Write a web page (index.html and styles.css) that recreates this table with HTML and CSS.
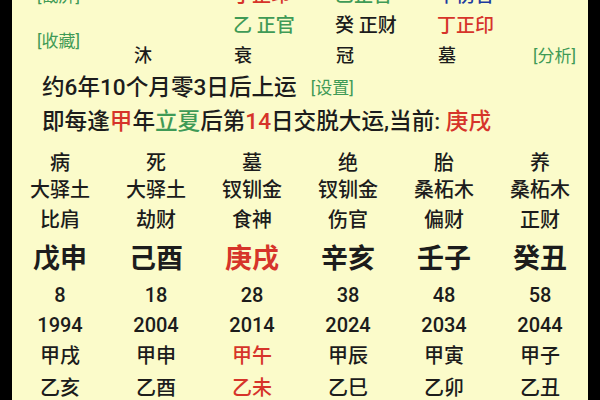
FILE: index.html
```html
<!DOCTYPE html>
<html lang="zh-CN">
<head>
<meta charset="utf-8">
<link rel="stylesheet" href="styles.css">
</head>
<body>
<div class="screen">
  <div class="pillars">
    <div class="label r1">[截屏]</div>
    <div class="label r23">[收藏]</div>
    <div class="c3 r1 red">丁正印</div>
    <div class="c4 r1 green">乙正官</div>
    <div class="c5 r1 blue">辛伤官</div>
    <div class="c3 r2 green">乙 正官</div>
    <div class="c4 r2">癸 正财</div>
    <div class="c5 r2 red">丁正印</div>
    <div class="c2 r3 stage">沐</div>
    <div class="c3 r3 stage">衰</div>
    <div class="c4 r3 stage">冠</div>
    <div class="c5 r3 stage">墓</div>
    <div class="c6 r3 label">[分析]</div>
  </div>
  <div class="info">
    <div class="line1">约6年10个月零3日后上运<span class="link">[设置]</span></div>
    <div class="line2">即每逢<span class="red">甲</span>年<span class="green">立夏</span>后第<span class="red">14</span>日交脱大运,当前: <span class="red">庚戌</span></div>
  </div>
  <div class="luck">
    <div>病</div><div>死</div><div>墓</div><div>绝</div><div>胎</div><div>养</div>
    <div>大驿土</div><div>大驿土</div><div>钗钏金</div><div>钗钏金</div><div>桑柘木</div><div>桑柘木</div>
    <div>比肩</div><div>劫财</div><div>食神</div><div>伤官</div><div>偏财</div><div>正财</div>
    <div class="big">戊申</div><div class="big">己酉</div><div class="big red">庚戌</div><div class="big">辛亥</div><div class="big">壬子</div><div class="big">癸丑</div>
    <div>8</div><div>18</div><div>28</div><div>38</div><div>48</div><div>58</div>
    <div>1994</div><div>2004</div><div>2014</div><div>2024</div><div>2034</div><div>2044</div>
    <div>甲戌</div><div>甲申</div><div class="red">甲午</div><div>甲辰</div><div>甲寅</div><div>甲子</div>
    <div>乙亥</div><div>乙酉</div><div class="red">乙未</div><div>乙巳</div><div>乙卯</div><div>乙丑</div>
  </div>
</div>
</body>
</html>
```

FILE: styles.css
```css
html, body {
  margin: 0;
  padding: 0;
  background: #000;
}
body {
  width: 600px;
  height: 400px;
  overflow: hidden;
}
.screen {
  margin: 0 12px;
  width: 576px;
  height: 400px;
  overflow: hidden;
  background: #fbfbca;
  color: #1c1c1c;
  font-family: Roboto, "Noto Sans CJK SC", sans-serif;
  font-weight: 500;
}
.red { color: #d6342a; }
.green { color: #3f9a56; }
.blue { color: #1c3a9e; }

.pillars {
  margin-top: -19px;
  display: grid;
  grid-template-columns: 121px 100px 102px 102px 96px 1fr;
  grid-template-rows: 30px 30px 30px;
  font-size: 19px;
  line-height: 30px;
}
.pillars .label {
  color: #3f9a56;
  font-size: 17px;
  font-weight: 400;
  padding-left: 25px;
}
.pillars .c6.label { padding-left: 0; }
.c2 { grid-column: 2; }
.c3 { grid-column: 3; }
.c4 { grid-column: 4; }
.c5 { grid-column: 5; }
.c6 { grid-column: 6; }
.r1 { grid-row: 1; }
.r2 { grid-row: 2; }
.r3 { grid-row: 3; }
.r23 { grid-row: 2 / span 2; align-self: center; }
.stage { padding-left: 1px; font-size: 18px; }

.info {
  margin-top: 1px;
  padding-left: 30px;
  font-size: 22.6px;
}
.line1 { line-height: 32px; }
.line2 { line-height: 36px; }
.link {
  color: #3f9a56;
  font-size: 17px;
  font-weight: 400;
  margin-left: 14px;
  vertical-align: 1px;
}

.luck {
  margin-top: 7px;
  display: grid;
  grid-template-columns: repeat(6, 96px);
  grid-template-rows: 28px 26px 34px 42px 36px 24px 34px 30px;
  text-align: center;
  font-size: 20px;
}
.luck > div {
  display: flex;
  align-items: center;
  justify-content: center;
  white-space: nowrap;
}
.luck .big {
  font-size: 27px;
  font-weight: bold;
}
.luck .big.red { color: #d6342a; }
```
